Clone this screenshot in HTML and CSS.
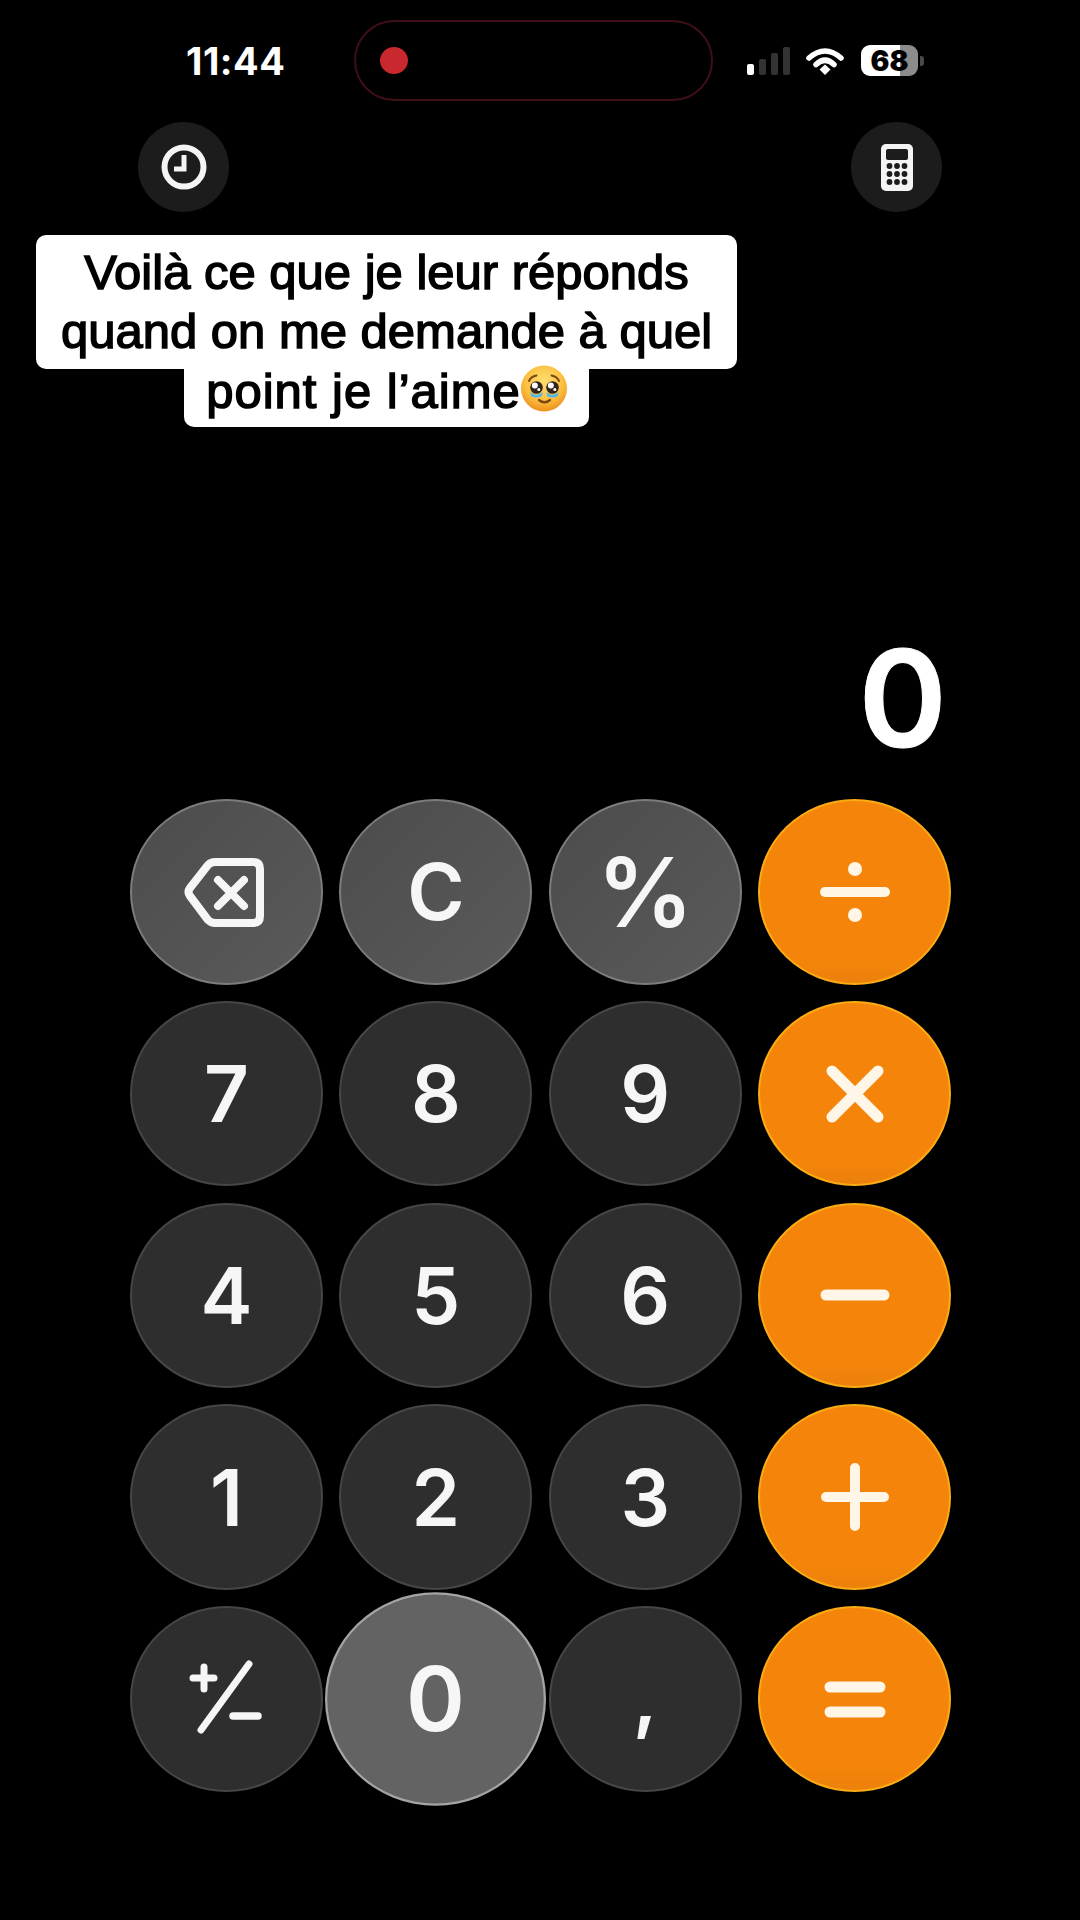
FILE: index.html
```html
<!DOCTYPE html>
<html lang="fr">
<head>
    <meta charset="UTF-8">
    <meta name="viewport" content="width=device-width, initial-scale=1.0">
    <title>Calculette</title>
    <link rel="stylesheet" href="styles.css">
</head>
<body>
    <div class="status">
        <span class="time">11:44</span>
        <div class="island"><span class="rec"></span></div>
        <div class="signal">
            <span class="bar bar1"></span>
            <span class="bar bar2"></span>
            <span class="bar bar3"></span>
            <span class="bar bar4"></span>
        </div>
        <svg class="wifi" viewBox="0 0 38 28">
            <path d="M3 11 Q19 -3 35 11" fill="none" stroke="#fff" stroke-width="5.500" stroke-linecap="round"/>
            <path d="M10 17.500 Q19 9 28 17.500" fill="none" stroke="#fff" stroke-width="5.500" stroke-linecap="round"/>
            <polygon points="13.500,22.500 19,17.500 24.500,22.500 19,28" fill="#fff"/>
        </svg>
        <div class="battery"><span>68</span></div>
        <span class="battery-cap"></span>
    </div>

    <div class="tools">
        <button class="tool">
            <svg class="clock" viewBox="0 0 46 46">
                <circle cx="23" cy="23" r="19.500" fill="none" stroke="#f4f4f4" stroke-width="6"/>
                <path d="M23 11 V25 H13" fill="none" stroke="#f4f4f4" stroke-width="5"/>
            </svg>
        </button>
        <button class="tool">
            <svg class="calc" viewBox="0 0 32 47">
                <rect width="32" height="47" rx="5" fill="#f4f4f4"/>
                <rect x="5" y="5" width="22" height="11" rx="2" fill="#1c1c1c"/>
                <g fill="#1c1c1c">
                    <circle cx="8.500" cy="22" r="2.900"/><circle cx="16" cy="22" r="2.900"/><circle cx="23.500" cy="22" r="2.900"/>
                    <circle cx="8.500" cy="30" r="2.900"/><circle cx="16" cy="30" r="2.900"/><circle cx="23.500" cy="30" r="2.900"/>
                    <circle cx="8.500" cy="38" r="2.900"/><circle cx="16" cy="38" r="2.900"/><circle cx="23.500" cy="38" r="2.900"/>
                </g>
            </svg>
        </button>
    </div>

    <div class="caption">
        <div class="caption-top">Voilà ce que je leur réponds<br>quand on me demande à quel</div>
        <div class="caption-end"><span class="caption-last">point je l’aime</span><svg class="emoji" viewBox="0 0 46 47">
            <defs>
                <radialGradient id="face" cx="50%" cy="35%" r="65%">
                    <stop offset="0" stop-color="#ffdf70"/>
                    <stop offset="0.65" stop-color="#fcbf3e"/>
                    <stop offset="1" stop-color="#ec8f1e"/>
                </radialGradient>
            </defs>
            <circle cx="23" cy="23.500" r="23" fill="url(#face)"/>
            <path d="M8 16 Q10 11.500 15.500 10.500 M30.500 10.500 Q36 11.500 38 16" fill="none" stroke="#7a4a14" stroke-width="2" stroke-linecap="round"/>
            <path d="M9.500 27 Q15.500 33 21.500 27 L21 31 Q15.500 34 10 31Z" fill="#4fb8ea"/>
            <path d="M25.500 27 Q31.500 33 37.500 27 L37 31 Q31.500 34 26 31Z" fill="#4fb8ea"/>
            <circle cx="15.500" cy="22.500" r="6.300" fill="#33241c"/>
            <circle cx="31.500" cy="22.500" r="6.300" fill="#33241c"/>
            <circle cx="13.800" cy="20.500" r="3" fill="#fff"/>
            <circle cx="29.800" cy="20.500" r="3" fill="#fff"/>
            <circle cx="17.800" cy="24.500" r="1.500" fill="#fff"/>
            <circle cx="33.800" cy="24.500" r="1.500" fill="#fff"/>
            <path d="M18 35 Q23.500 39.500 29 35" fill="none" stroke="#7a4510" stroke-width="2.400" stroke-linecap="round"/>
        </svg></div>
    </div>

    <div class="display">0</div>

    <div class="keypad">
        <button class="key gray" aria-label="effacer">
            <svg viewBox="0 0 192 184">
                <path d="M84 62 H122 Q129 62 129 69 V116 Q129 123 122 123 H84 Q80 123 77 120 L59 96 Q56 92 59 88 L77 65 Q80 62 84 62Z" fill="none" stroke="#f6f6f6" stroke-width="8" stroke-linejoin="round"/>
                <path d="M87 80 L113 106 M113 80 L87 106" fill="none" stroke="#f6f6f6" stroke-width="8" stroke-linecap="round"/>
            </svg>
        </button>
        <button class="key gray">C</button>
        <button class="key gray percent">%</button>
        <button class="key orange" aria-label="diviser">
            <svg viewBox="0 0 192 184">
                <line x1="66" y1="92" x2="126" y2="92" stroke="#fff6e8" stroke-width="10" stroke-linecap="round"/>
                <circle cx="96" cy="69" r="7" fill="#fff6e8"/>
                <circle cx="96" cy="115" r="7" fill="#fff6e8"/>
            </svg>
        </button>

        <button class="key dark">7</button>
        <button class="key dark">8</button>
        <button class="key dark">9</button>
        <button class="key orange" aria-label="multiplier">
            <svg viewBox="0 0 192 184">
                <path d="M73 69 L119 115 M119 69 L73 115" fill="none" stroke="#fff6e8" stroke-width="11" stroke-linecap="round"/>
            </svg>
        </button>

        <button class="key dark">4</button>
        <button class="key dark">5</button>
        <button class="key dark">6</button>
        <button class="key orange" aria-label="soustraire">
            <svg viewBox="0 0 192 184">
                <line x1="67" y1="92" x2="125" y2="92" stroke="#fff6e8" stroke-width="11" stroke-linecap="round"/>
            </svg>
        </button>

        <button class="key dark">1</button>
        <button class="key dark">2</button>
        <button class="key dark">3</button>
        <button class="key orange" aria-label="additionner">
            <svg viewBox="0 0 192 184">
                <path d="M67 92 H125 M96 63 V121" fill="none" stroke="#fff6e8" stroke-width="10" stroke-linecap="round"/>
            </svg>
        </button>

        <button class="key dark" aria-label="changer le signe">
            <svg viewBox="0 0 192 184">
                <path d="M62 71 H83 M73 60 V82" fill="none" stroke="#f6f6f6" stroke-width="7" stroke-linecap="round"/>
                <line x1="70" y1="123" x2="118" y2="57" stroke="#f6f6f6" stroke-width="7" stroke-linecap="round"/>
                <line x1="102" y1="109" x2="127" y2="109" stroke="#f6f6f6" stroke-width="7.500" stroke-linecap="round"/>
            </svg>
        </button>
        <button class="key pressed">0</button>
        <button class="key dark comma">,</button>
        <button class="key orange" aria-label="égal">
            <svg viewBox="0 0 192 184">
                <path d="M71 80 H121 M71 105 H121" fill="none" stroke="#fff6e8" stroke-width="11" stroke-linecap="round"/>
            </svg>
        </button>
    </div>
</body>
</html>
```

FILE: styles.css
```css
* {
    box-sizing: border-box;
}

body {
    margin: 0;
    width: 1080px;
    height: 1920px;
    position: relative;
    overflow: hidden;
    background: #000;
    color: #f6f6f6;
    font-family: Inter, sans-serif;
}

button {
    padding: 0;
    border: none;
    font-family: inherit;
    color: inherit;
}

/* status bar */
.status {
    display: flex;
    align-items: center;
    height: 81px;
    margin-top: 20px;
    padding-left: 186px;
}

.time {
    width: 168px;
    font-family: Inter, sans-serif;
    font-size: 38px;
    font-weight: 700;
    letter-spacing: 0.5px;
    color: #fff;
}

.island {
    display: flex;
    align-items: center;
    width: 359px;
    height: 81px;
    padding-left: 24px;
    border: 2.500px solid #3f0f18;
    border-radius: 41px;
}

.rec {
    width: 28px;
    height: 27px;
    border-radius: 50%;
    background: #c8282e;
}

.signal {
    display: flex;
    align-items: flex-end;
    gap: 5px;
    height: 28px;
    margin-left: 34px;
}

.bar {
    width: 7px;
    border-radius: 2px;
    background: #333;
}

.bar1 {
    height: 11px;
    background: #fff;
}

.bar2 {
    height: 16px;
}

.bar3 {
    height: 22px;
}

.bar4 {
    height: 28px;
}

.wifi {
    width: 38px;
    height: 28px;
    margin-left: 16px;
}

.battery {
    display: flex;
    align-items: center;
    justify-content: center;
    width: 57px;
    height: 31px;
    margin-left: 17px;
    border-radius: 9px;
    background: linear-gradient(90deg, #fff 0, #fff 68%, #8c8c8c 68%, #8c8c8c 100%);
    color: #000;
    font-size: 28px;
    font-weight: 900;
}

.battery-cap {
    width: 4px;
    height: 10px;
    margin-left: 2px;
    border-radius: 0 3px 3px 0;
    background: #4a4a4a;
}

/* round buttons under the status bar */
.tools {
    display: flex;
    justify-content: space-between;
    margin-top: 21px;
    padding: 0 138px;
}

.tool {
    display: flex;
    align-items: center;
    justify-content: center;
    width: 91px;
    height: 90px;
    border-radius: 50%;
    background: #1c1c1c;
}

.clock {
    width: 46px;
    height: 46px;
}

.calc {
    width: 32px;
    height: 47px;
}

/* caption sits on top of the app */
.caption {
    position: absolute;
    top: 235px;
    left: 36px;
    width: 701px;
    display: flex;
    flex-direction: column;
    align-items: center;
    color: #000;
    font-family: "Liberation Sans", Arial, sans-serif;
    font-size: 49px;
    line-height: 59px;
    text-align: center;
    -webkit-text-stroke: 1.500px #000;
}

.caption-top {
    width: 701px;
    height: 134px;
    padding-top: 8px;
    border-radius: 10px;
    background: #fff;
}

.caption-end {
    display: flex;
    align-items: flex-start;
    justify-content: center;
    width: 405px;
    height: 58px;
    border-radius: 0 0 10px 10px;
    background: #fff;
}

.caption-last {
    letter-spacing: 1px;
    margin-top: -7px;
}

.emoji {
    flex: none;
    width: 46px;
    height: 47px;
    margin-top: -4px;
}

/* calculator */
.display {
    height: 100px;
    margin-top: 436px;
    padding-right: 133px;
    text-align: right;
    font-size: 134px;
    font-weight: 600;
    line-height: 100px;
    color: #fff;
    -webkit-text-stroke: 1px #fff;
}

.keypad {
    display: grid;
    grid-template-columns: repeat(4, 193px);
    grid-auto-rows: 185.500px;
    column-gap: 16.400px;
    row-gap: 16.250px;
    margin-top: 51px;
    padding-left: 130px;
}

.key {
    display: flex;
    align-items: center;
    justify-content: center;
    border-radius: 50%;
    border: 2px solid transparent;
    font-size: 78px;
    font-weight: 600;
}

.key svg {
    width: 192px;
    height: 184px;
    flex: none;
}

.gray {
    background: linear-gradient(135deg, #4c4c4c, #5a5a5a);
    border-color: #7c7c7c;
}

.dark {
    background: #2e2e2e;
    border-color: #464646;
}

.orange {
    background: linear-gradient(180deg, #f4850a 0, #f4850a 88%, #ec800b 100%);
    border-color: #fbab14;
}

.pressed {
    background: #636363;
    border-color: #a4a4a4;
    transform: scale(1.145, 1.148);
}

.percent {
    font-size: 96px;
}

.comma {
    padding-bottom: 6px;
}
```
